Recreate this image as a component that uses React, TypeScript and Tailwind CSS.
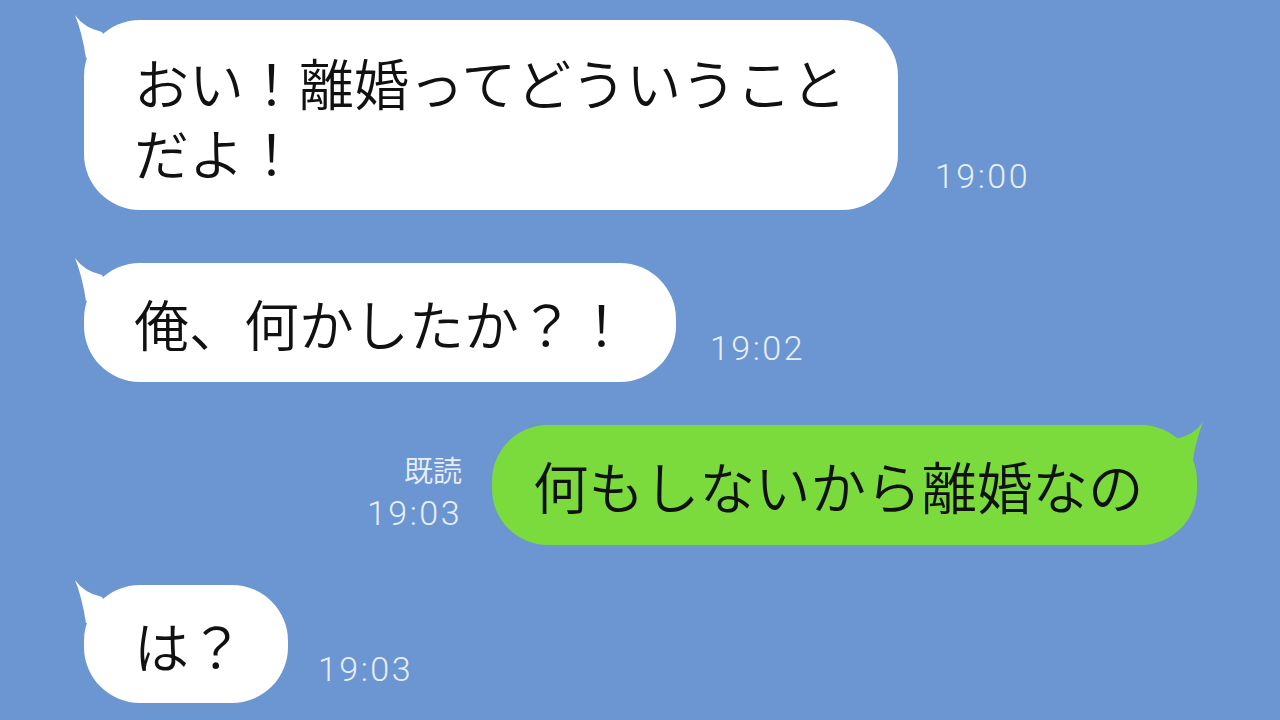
import React from 'react';

const jp = { fontFamily: '"Noto Sans CJK JP", "Noto Sans", sans-serif' };
const num = { fontFamily: 'Roboto, "Liberation Sans", sans-serif' };

function Tail({ color, right }: { color: string; right?: boolean }) {
  return (
    <svg
      width="46"
      height="48"
      viewBox="0 0 46 48"
      className={right ? 'absolute -right-[9px] -top-[6px] -scale-x-100' : 'absolute -left-[12px] -top-[8px]'}
    >
      <path d="M3 3 Q12 16 30 20 L40 42 L14 46 Q10 20 3 3Z" fill={color} />
    </svg>
  );
}

function Time({ children, className = '' }: { children: React.ReactNode; className?: string }) {
  return (
    <div style={num} className={`text-[34px] leading-none font-light tracking-[2.5px] text-[#e9eff9] ${className}`}>
      {children}
    </div>
  );
}

export default function App() {
  return (
    <div className="w-[1280px] h-[720px] overflow-hidden bg-[#6b96d1] pt-[20px] flex flex-col">
      {/* 1 */}
      <div className="flex items-end pl-[84px]">
        <div
          style={jp}
          className="relative w-[814px] h-[190px] rounded-[56px] bg-white pl-[50px] pt-[26px] text-[55px] font-[350] leading-[70px] text-[#111] whitespace-nowrap"
        >
          <Tail color="#ffffff" />
          <span className="relative">おい！離婚ってどういうこと<br />だよ！</span>
        </div>
        <Time className="ml-[37px] mb-[17px]">19:00</Time>
      </div>

      {/* 2 */}
      <div className="flex items-end pl-[84px] mt-[53px]">
        <div
          style={jp}
          className="relative w-[592px] h-[119px] rounded-[56px] bg-white pl-[50px] pt-[24px] text-[55px] font-[350] leading-[70px] text-[#111] whitespace-nowrap"
        >
          <Tail color="#ffffff" />
          <span className="relative">俺、何かしたか？！</span>
        </div>
        <Time className="ml-[34px] mb-[17px]">19:02</Time>
      </div>

      {/* 3 */}
      <div className="flex items-end justify-end pr-[83px] mt-[43px]">
        <div className="flex flex-col items-end mr-[30px] mb-[15px]">
          <div style={jp} className="text-[29px] font-[350] leading-none text-[#e9eff9] mb-[12px]">既読</div>
          <Time>19:03</Time>
        </div>
        <div
          style={jp}
          className="relative w-[705px] h-[120px] rounded-[56px] bg-[#7bdb3d] pl-[41px] pt-[25px] text-[55.5px] font-[350] leading-[70px] text-[#111] whitespace-nowrap"
        >
          <Tail color="#7bdb3d" right />
          <span className="relative">何もしないから離婚なの</span>
        </div>
      </div>

      {/* 4 */}
      <div className="flex items-end pl-[84px] mt-[40px]">
        <div
          style={jp}
          className="relative w-[204px] h-[118px] rounded-[56px] bg-white pl-[50px] pt-[24px] text-[55px] font-[350] leading-[70px] text-[#111] whitespace-nowrap"
        >
          <Tail color="#ffffff" />
          <span className="relative">は？</span>
        </div>
        <Time className="ml-[30px] mb-[17px]">19:03</Time>
      </div>
    </div>
  );
}
